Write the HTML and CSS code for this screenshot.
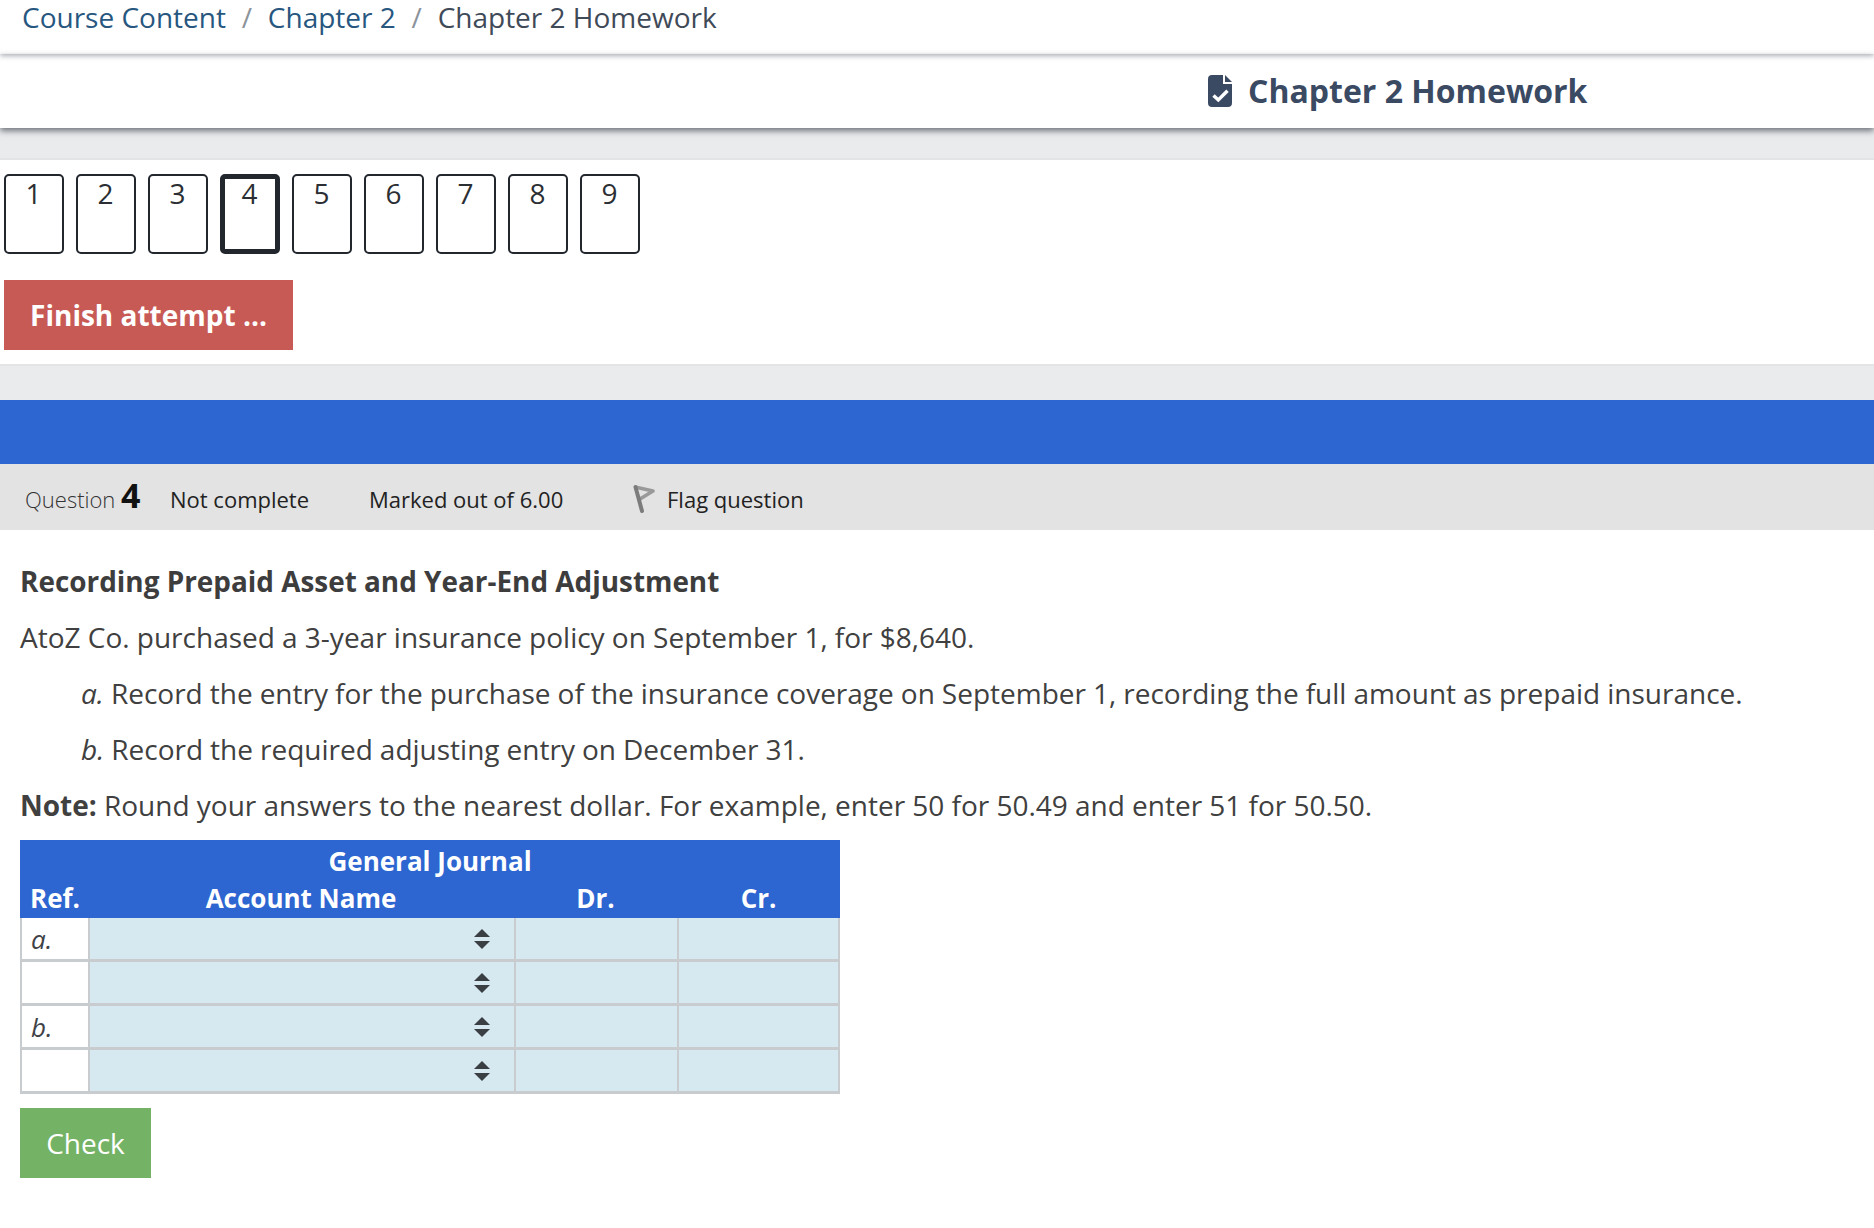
FILE: index.html
```html
<!DOCTYPE html>
<html lang="en">
<head>
<meta charset="utf-8">
<title>Chapter 2 Homework</title>
<link rel="stylesheet" href="styles.css">
</head>
<body>
<nav class="crumbs"><a>Course Content</a><span class="sep">/</span><a>Chapter 2</a><span class="sep">/</span><span>Chapter 2 Homework</span></nav>
<header class="title-bar">
  <div class="title">
    <svg class="doc" viewBox="0 0 24 32" width="24" height="32"><path fill="#3b4a63" d="M4 0h11v9h9v19a4 4 0 0 1-4 4H4a4 4 0 0 1-4-4V4a4 4 0 0 1 4-4z"/><path fill="#3b4a63" d="M17 0l7 7h-7z"/><path fill="none" stroke="#fff" stroke-width="3.400" d="M5.500 20.500l4.800 4.500 9.200-9.300"/></svg>
    <h1>Chapter 2 Homework</h1>
  </div>
</header>
<div class="gap gap-top"></div>
<section class="quiz-nav">
  <div class="qn-row">
    <a class="qn">1</a><a class="qn">2</a><a class="qn">3</a><a class="qn current">4</a><a class="qn">5</a><a class="qn">6</a><a class="qn">7</a><a class="qn">8</a><a class="qn">9</a>
  </div>
  <a class="finish">Finish attempt ...</a>
</section>
<div class="gap gap-mid"></div>
<div class="blue-band"></div>
<div class="q-info">
  <span class="q-no">Question <b>4</b></span>
  <span class="q-state">Not complete</span>
  <span class="q-mark">Marked out of 6.00</span>
  <span class="q-flag">
    <svg viewBox="0 0 24 30" width="24" height="30"><path fill="none" stroke="#999" stroke-width="3.600" stroke-linejoin="round" d="M3 3l18 4-13 8"/><path fill="none" stroke="#7c7c7c" stroke-width="4" stroke-linecap="round" d="M3.500 3l6.500 24"/></svg>
    Flag question
  </span>
</div>
<main class="content">
  <h2>Recording Prepaid Asset and Year-End Adjustment</h2>
  <p>AtoZ Co. purchased a 3-year insurance policy on September 1, for $8,640.</p>
  <p class="indent"><i>a.</i> Record the entry for the purchase of the insurance coverage on September 1, recording the full amount as prepaid insurance.</p>
  <p class="indent"><i>b.</i> Record the required adjusting entry on December 31.</p>
  <p><b>Note:</b> Round your answers to the nearest dollar. For example, enter 50 for 50.49 and enter 51 for 50.50.</p>
  <table class="journal">
    <colgroup><col class="c-ref"><col class="c-acct"><col class="c-amt"><col class="c-amt"></colgroup>
    <thead>
      <tr><th colspan="4" class="cap">General Journal</th></tr>
      <tr><th class="ref-h">Ref.</th><th>Account Name</th><th>Dr.</th><th>Cr.</th></tr>
    </thead>
    <tbody>
      <tr><td class="ref"><i>a.</i></td><td class="sel"><span class="spin"></span></td><td></td><td></td></tr>
      <tr><td class="ref"></td><td class="sel"><span class="spin"></span></td><td></td><td></td></tr>
      <tr><td class="ref"><i>b.</i></td><td class="sel"><span class="spin"></span></td><td></td><td></td></tr>
      <tr><td class="ref"></td><td class="sel"><span class="spin"></span></td><td></td><td></td></tr>
    </tbody>
  </table>
  <a class="check">Check</a>
</main>
</body>
</html>
```
FILE: styles.css
```css
* { box-sizing: border-box; }
html, body { margin: 0; padding: 0; background: #fff; }
body { font-family: "Open Sans", "Noto Sans", sans-serif; color: #373a3c; height: 1228px; overflow: hidden; }

.crumbs { height: 54px; padding-left: 22px; font-size: 28px; line-height: 34px; color: #3f4a58; display: flex; align-items: flex-start; box-shadow: 0 2px 5px rgba(70,80,95,.45); position: relative; z-index: 2; }
.crumbs a { color: #27577f; }
.sep { color: #8b939b; margin: 0 15.800px; }

.title-bar { height: 74px; background: #fff; box-shadow: 0 3px 6px rgba(50,55,65,.65); position: relative; z-index: 1; display: flex; align-items: center; }
.title { margin-left: 1208px; display: flex; align-items: center; gap: 16px; }
.doc { flex: none; }
.title h1 { margin: 0; font-size: 32px; line-height: 44px; font-weight: 700; color: #3b4a63; }

.gap { background: #e9ebed; }
.gap-top { height: 32px; border-bottom: 2px solid #e2e4e6; }
.gap-mid { height: 36px; border-top: 2px solid #e2e4e6; }

.quiz-nav { padding: 14px 0 14px 4px; height: 204px; }
.qn-row { display: flex; gap: 12px; }
.qn { width: 60px; height: 80px; padding-right: 1px; border: 2px solid #22272e; border-radius: 5px; text-align: center; font-size: 28px; line-height: 34px; color: #2b2f33; }
.qn.current { border-width: 5px; line-height: 28px; }
.finish { display: inline-block; width: 289px; height: 70px; margin-top: 26px; background: #c85a55; color: #fff; font-size: 28px; font-weight: 700; line-height: 70px; text-align: center; }

.blue-band { height: 64px; background: #2d65d1; }

.q-info { height: 66px; padding-top: 4px; background: #e3e3e3; display: flex; align-items: center; font-size: 22px; color: #222; padding-left: 25px; }
.q-no { font-weight: 300; width: 145px; padding-bottom: 5px; color: #333; }
.q-no b { font-size: 34px; font-weight: 700; color: #111; line-height: 30px; }
.q-state { width: 199px; }
.q-mark { width: 263px; }
.q-flag { display: flex; align-items: center; gap: 11px; }

.content { padding: 0 20px; }
.content h2 { margin: 0; padding-top: 23px; font-size: 27.900px; line-height: 56px; font-weight: 700; color: #3d3d3d; }
.content p { margin: 0; font-size: 28px; line-height: 56px; color: #404040; white-space: nowrap; word-spacing: -0.07px; }
.content p.indent { padding-left: 61px; word-spacing: -0.25px; }
.content p b { font-weight: 700; }

.journal { border-collapse: separate; border-spacing: 0; table-layout: fixed; width: 820px; margin-top: 7px; }
.c-ref { width: 68px; }
.c-acct { width: 426px; }
.c-amt { width: 163px; }
.journal thead { background: #2d65d1; color: #fff; }
.journal th { font-size: 26px; font-weight: 700; padding: 0 0 2px; height: 39px; line-height: 36px; text-align: center; }
.journal th.cap { padding: 2px 0 0; }
.journal th.ref-h { text-align: left; padding-left: 10px; }
.journal td { height: 44px; border-left: 2px solid #c9cccf; border-bottom: 3px solid #c9cccf; background: #d6e8f0; padding: 0; }
.journal td:last-child { border-right: 2px solid #c9cccf; }
.journal td.ref { background: #fff; font-size: 26px; padding-left: 9px; color: #3f4347; }
.journal td.sel { position: relative; }
.spin { position: absolute; right: 24px; top: 50%; width: 16px; height: 20px; transform: translateY(-50%); }
.spin::before, .spin::after { content: ""; position: absolute; left: 0; border-left: 8px solid transparent; border-right: 8px solid transparent; }
.spin::before { top: 0; border-bottom: 8px solid #3a3f44; }
.spin::after { bottom: 0; border-top: 8px solid #3a3f44; }

.check { display: block; width: 131px; height: 70px; margin-top: 14px; background: #74b265; color: #fff; font-size: 28px; line-height: 70px; text-align: center; }
```
